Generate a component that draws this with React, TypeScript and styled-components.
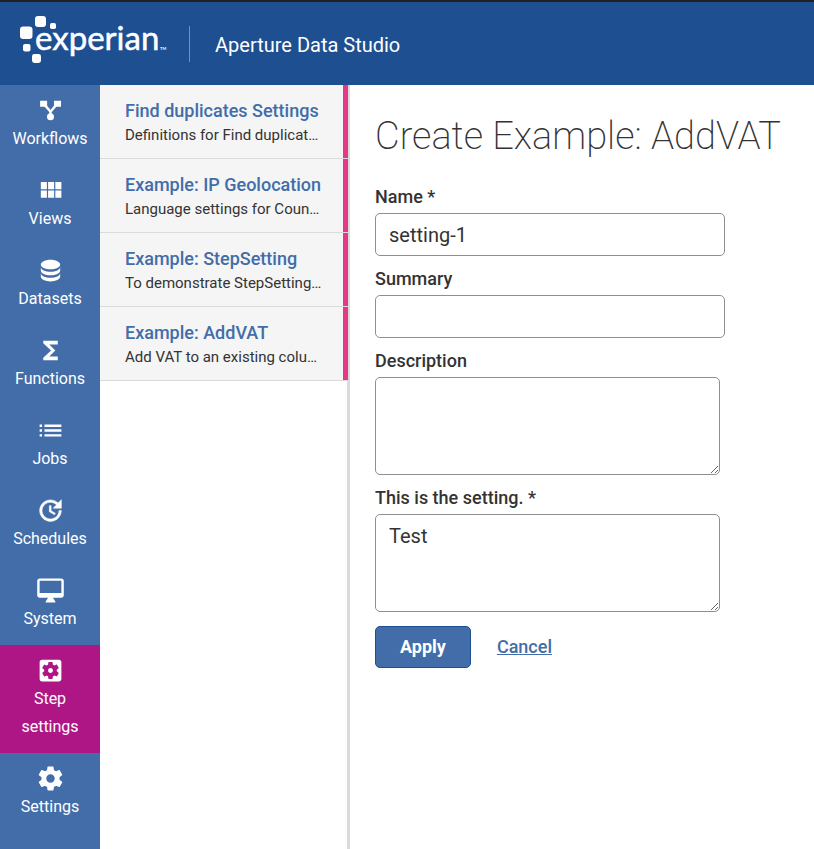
import React from "react";
import styled, { createGlobalStyle } from "styled-components";

const GlobalStyle = createGlobalStyle`
  *, *::before, *::after { box-sizing: border-box; }
  body {
    margin: 0;
    background: #fff;
    color: #333;
    font-family: Roboto, "Liberation Sans", sans-serif;
    font-size: 16px;
    line-height: 28px;
  }
`;

const Page = styled.div`
  display: flex;
  flex-direction: column;
  min-height: 100vh;
`;

const Header = styled.header`
  display: flex;
  align-items: center;
  height: 85px;
  padding: 0 20px;
  border-top: 2px solid #202124;
  background: #1d4f91;
  color: #fff;
`;

const LogoLink = styled.a`
  display: block;
  width: 147px;
  height: 48px;
  margin-top: -8px;
  color: #fff;
`;

const ProductName = styled.div`
  display: flex;
  align-items: center;
  height: 36px;
  margin-left: 22px;
  padding: 2px 0 0 25px;
  border-left: 1px solid #6b93c8;
  font-size: 20px;
`;

const Body = styled.div`
  display: flex;
  flex: 1;
`;

const Nav = styled.nav`
  flex: none;
  width: 100px;
  background: #426da9;
`;

const NavItem = styled.a<{ $active?: boolean }>`
  display: flex;
  flex-direction: column;
  align-items: center;
  padding: 11px 8px 12px;
  background: ${(p) => (p.$active ? "#af1685" : "transparent")};
  color: #fff;
  text-align: center;
  text-decoration: none;
`;

const Icon = styled.svg`
  display: block;
  width: 29px;
  height: 29px;
  fill: currentColor;
`;

const ListPanel = styled.aside`
  flex: none;
  width: 250px;
  border-right: 3px solid #dadada;
`;

const List = styled.ul`
  margin: 0 -1px 0 0;
  padding: 0;
  list-style: none;
`;

const ListItem = styled.li`
  border-bottom: 1px solid #dadada;
`;

const ListLink = styled.a`
  display: block;
  height: 73px;
  padding: 12px 15px 0 25px;
  border-right: 5px solid #e63888;
  background: #f5f5f5;
  color: #333;
  text-decoration: none;
  white-space: nowrap;
`;

const ItemTitle = styled.div`
  color: #426da9;
  font-size: 18px;
  font-weight: 500;
  line-height: 28px;
`;

const ItemText = styled.div`
  font-size: 15px;
  line-height: 20px;
`;

const Main = styled.main`
  flex: 1;
  min-width: 0;
  padding: 25px;
`;

const Title = styled.h1`
  margin: 0 0 21px;
  font-size: 38px;
  font-weight: 200;
  line-height: 52px;
`;

const Field = styled.div`
  display: flex;
  flex-direction: column;
  gap: 2px;
  margin-bottom: 9px;
`;

const Label = styled.label`
  font-size: 18px;
  font-weight: 500;
`;

const Input = styled.input`
  width: 100%;
  max-width: 350px;
  height: 43px;
  padding: 0 13px;
  border: 1px solid #8f8f8f;
  border-radius: 5px;
  background: #fff;
  color: #333;
  font: inherit;
  font-size: 20px;
`;

const TextArea = styled.textarea`
  display: block;
  width: 100%;
  max-width: 345px;
  height: 98px;
  padding: 7px 13px;
  border: 1px solid #8f8f8f;
  border-radius: 5px;
  background: #fff;
  color: #333;
  font: inherit;
  font-size: 20px;
  resize: both;
`;

const Actions = styled.div`
  display: flex;
  align-items: center;
  gap: 26px;
  margin-top: 14px;
`;

const ApplyButton = styled.button`
  height: 42px;
  padding: 0 24px;
  border: 1px solid #1d4f91;
  border-radius: 5px;
  background: #426da9;
  color: #fff;
  font: inherit;
  font-size: 18px;
  font-weight: 700;
`;

const CancelLink = styled.a`
  color: #426da9;
  font-size: 18px;
  font-weight: 500;
`;

const navItems = [
  {
    label: "Workflows",
    icon: (
      <>
        <path d="M3.400 4h5.800v4.800H3.400zM14.900 4h5.800v4.800h-5.800z" />
        <path d="M6.500 6.500 12 13l5.500-6.500M12 13v5" fill="none" stroke="currentColor" strokeWidth="2" />
        <circle cx="12" cy="17.200" r="2.900" />
      </>
    ),
  },
  {
    label: "Views",
    icon: (
      <path d="M4 11h5V5H4v6zm0 7h5v-6H4v6zm6 0h5v-6h-5v6zm6 0h5v-6h-5v6zm-6-7h5V5h-5v6zm6-6v6h5V5h-5z" />
    ),
  },
  {
    label: "Datasets",
    icon: (
      <path d="M12 3C7.58 3 4 4.79 4 7s3.58 4 8 4 8-1.79 8-4-3.58-4-8-4M4 9v3c0 2.21 3.58 4 8 4s8-1.79 8-4V9c0 2.21-3.58 4-8 4s-8-1.79-8-4m0 5v3c0 2.21 3.58 4 8 4s8-1.79 8-4v-3c0 2.21-3.58 4-8 4s-8-1.79-8-4z" />
    ),
  },
  {
    label: "Functions",
    icon: <path d="M18 4H6v2l6.5 6L6 18v2h12v-3h-7l5-5-5-5h7z" />,
  },
  {
    label: "Jobs",
    icon: (
      <path d="M3 13h2v-2H3v2zm0 4h2v-2H3v2zm0-8h2V7H3v2zm4 4h14v-2H7v2zm0 4h14v-2H7v2zM7 7v2h14V7H7z" />
    ),
  },
  {
    label: "Schedules",
    icon: (
      <path
        d="M21 10.12h-6.78l2.74-2.82c-2.73-2.7-7.15-2.8-9.88-.1-2.73 2.71-2.73 7.08 0 9.79s7.15 2.71 9.88 0C18.32 15.65 19 14.08 19 12.1h2c0 1.98-.88 4.55-2.64 6.29-3.51 3.48-9.21 3.48-12.72 0-3.5-3.47-3.53-9.11-.02-12.58s9.14-3.47 12.65 0L21 3v7.12zM12.5 8v4.25l3.5 2.08-.72 1.21L11 13V8h1.5z"
        stroke="currentColor"
        strokeWidth="0.400"
      />
    ),
  },
  {
    label: "System",
    icon: (
      <path d="M21 2H3c-1.1 0-2 .9-2 2v12c0 1.1.9 2 2 2h7l-2 3v1h8v-1l-2-3h7c1.1 0 2-.9 2-2V4c0-1.1-.9-2-2-2zm0 12H3V4h18v10z" />
    ),
  },
  {
    label: "Step settings",
    active: true,
    icon: (
      <path d="M12 10c-1.1 0-2 .9-2 2s.9 2 2 2 2-.9 2-2-.9-2-2-2zm7-7H5c-1.11 0-2 .9-2 2v14c0 1.1.89 2 2 2h14c1.11 0 2-.9 2-2V5c0-1.1-.89-2-2-2zm-1.75 9c0 .23-.02.46-.05.68l1.48 1.16c.13.11.17.3.08.45l-1.4 2.42c-.09.15-.27.21-.43.15l-1.74-.7c-.36.28-.76.51-1.18.69l-.26 1.85c-.03.17-.18.3-.35.3h-2.8c-.17 0-.32-.13-.35-.29l-.26-1.85c-.43-.18-.82-.41-1.18-.69l-1.74.7c-.16.06-.34 0-.43-.15l-1.4-2.42c-.09-.15-.05-.34.08-.45l1.48-1.16c-.03-.23-.05-.46-.05-.69 0-.23.02-.46.05-.68l-1.48-1.16c-.13-.11-.17-.3-.08-.45l1.4-2.42c.09-.15.27-.21.43-.15l1.74.7c.36-.28.76-.51 1.18-.69l.26-1.85c.03-.17.18-.3.35-.3h2.8c.17 0 .32.13.35.29l.26 1.85c.43.18.82.41 1.18.69l1.74-.7c.16-.06.34 0 .43.15l1.4 2.42c.09.15.05.34-.08.45l-1.48 1.16c.03.23.05.46.05.69z" />
    ),
  },
  {
    label: "Settings",
    icon: (
      <path d="M19.43 12.98c.04-.32.07-.64.07-.98s-.03-.66-.07-.98l2.11-1.65c.19-.15.24-.42.12-.64l-2-3.46c-.12-.22-.39-.3-.61-.22l-2.49 1c-.52-.4-1.08-.73-1.69-.98l-.38-2.65C14.46 2.18 14.25 2 14 2h-4c-.25 0-.46.18-.49.42l-.38 2.65c-.61.25-1.17.59-1.69.98l-2.49-1c-.23-.09-.49 0-.61.22l-2 3.46c-.13.22-.07.49.12.64l2.11 1.65c-.04.32-.07.65-.07.98s.03.66.07.98l-2.11 1.65c-.19.15-.24.42-.12.64l2 3.46c.12.22.39.3.61.22l2.49-1c.52.4 1.08.73 1.69.98l.38 2.65c.03.24.24.42.49.42h4c.25 0 .46-.18.49-.42l.38-2.65c.61-.25 1.17-.59 1.69-.98l2.49 1c.23.09.49 0 .61-.22l2-3.46c.12-.22.07-.49-.12-.64l-2.11-1.65zM12 15.5c-1.93 0-3.5-1.57-3.5-3.5s1.57-3.5 3.5-3.5 3.5 1.57 3.5 3.5-1.57 3.5-3.5 3.5z" />
    ),
  },
];

const settings = [
  { title: "Find duplicates Settings", text: "Definitions for Find duplicat…" },
  { title: "Example: IP Geolocation", text: "Language settings for Coun…" },
  { title: "Example: StepSetting", text: "To demonstrate StepSetting…" },
  { title: "Example: AddVAT", text: "Add VAT to an existing colu…" },
];

function Logo() {
  return (
    <svg width="147" height="48" viewBox="0 0 147 48" fill="currentColor" role="img" aria-label="experian">
      <rect x="15" y="0" width="11" height="11" rx="3" />
      <rect x="30" y="7" width="6" height="6" rx="1.800" />
      <rect x="0" y="10.500" width="12.500" height="12.500" rx="3.200" />
      <rect x="3" y="28" width="7.500" height="7.500" rx="2" />
      <rect x="12" y="38" width="9" height="9" rx="2.400" />
      <text
        x="15"
        y="34"
        fontFamily="Lato, sans-serif"
        fontSize="33"
        stroke="currentColor"
        strokeWidth="0.500"
      >
        experian
      </text>
      <text x="140" y="34" fontFamily="Lato, sans-serif" fontSize="4" fontWeight="700">
        TM
      </text>
    </svg>
  );
}

export default function App() {
  return (
    <Page>
      <GlobalStyle />
      <Header>
        <LogoLink href="#home">
          <Logo />
        </LogoLink>
        <ProductName>Aperture Data Studio</ProductName>
      </Header>
      <Body>
        <Nav aria-label="Main">
          {navItems.map((item) => (
            <NavItem
              key={item.label}
              href={"#" + item.label.toLowerCase().replace(" ", "-")}
              $active={item.active}
              aria-current={item.active ? "page" : undefined}
            >
              <Icon viewBox="0 0 24 24" aria-hidden="true">
                {item.icon}
              </Icon>
              <span>{item.label}</span>
            </NavItem>
          ))}
        </Nav>
        <ListPanel>
          <List>
            {settings.map((s) => (
              <ListItem key={s.title}>
                <ListLink href="#step-settings">
                  <ItemTitle>{s.title}</ItemTitle>
                  <ItemText>{s.text}</ItemText>
                </ListLink>
              </ListItem>
            ))}
          </List>
        </ListPanel>
        <Main>
          <Title>Create Example: AddVAT</Title>
          <form onSubmit={(e) => e.preventDefault()}>
            <Field>
              <Label htmlFor="name">Name *</Label>
              <Input id="name" type="text" required defaultValue="setting-1" />
            </Field>
            <Field>
              <Label htmlFor="summary">Summary</Label>
              <Input id="summary" type="text" />
            </Field>
            <Field>
              <Label htmlFor="description">Description</Label>
              <TextArea id="description" />
            </Field>
            <Field>
              <Label htmlFor="setting">This is the setting. *</Label>
              <TextArea id="setting" required defaultValue="Test" />
            </Field>
            <Actions>
              <ApplyButton type="submit">Apply</ApplyButton>
              <CancelLink href="#cancel">Cancel</CancelLink>
            </Actions>
          </form>
        </Main>
      </Body>
    </Page>
  );
}
